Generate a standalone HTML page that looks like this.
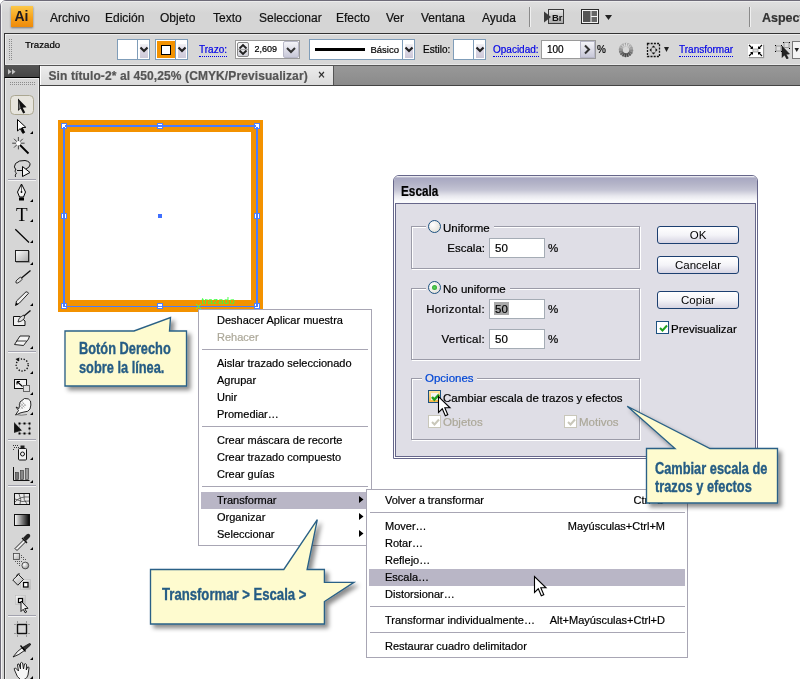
<!DOCTYPE html>
<html><head><meta charset="utf-8">
<style>
*{margin:0;padding:0;box-sizing:border-box}
html,body{width:800px;height:679px;overflow:hidden}
body{position:relative;background:#fff;font-family:"Liberation Sans",sans-serif;color:#000;-webkit-font-smoothing:antialiased}
.a{position:absolute}
.t{position:absolute;white-space:nowrap;line-height:1;-webkit-text-stroke:.2px currentColor}
#frame{left:0;top:0;width:830px;height:700px;background:linear-gradient(#dedede 2px,#dcdcdc 5px,#d5d5d5 12px);border:1px solid #6e6b78;border-radius:6px 0 0 0}
#frame2{left:1px;top:1px;width:830px;height:700px;border-left:1px solid #f2f2f2;border-top:1px solid #ececec;border-radius:4px 0 0 0}
.mb{font-size:12px;top:12px;color:#111}
#ctl{left:4px;top:33px;width:800px;height:32px;border-top:1px solid #333;border-left:1px solid #333;background:#d7d7d7}
#ctl2{left:5px;top:34px;width:800px;height:30px;border-top:1px solid #ededed;border-left:1px solid #ededed}
.blue{color:#0000e6}
.sw{top:39px;width:33px;height:21px;border:1px solid #7f9db9;background:#fff}
.dd{position:absolute;left:19px;top:0;width:12px;height:19px;border-left:1px solid #7f9db9;background:#fff}
.dd::before{content:"";position:absolute;left:2px;top:4px;width:8px;height:14px;background:linear-gradient(#f2f2f4,#dcd8e6 40%,#ccc8d8)}
.h{position:absolute;width:6px;height:6px;background:#fff;border:1px solid #4f81ff}
.mi{font-size:11px;color:#000}
.sep{height:1px;background:#a8a6b4}
.grp{position:absolute;border:1px solid #9b9ba8;box-shadow:1px 1px 0 #fff, inset 1px 1px 0 #fff}
.radio{position:absolute;width:13px;height:13px;border-radius:50%;border:1px solid #1c5180;background:radial-gradient(circle at 35% 35%,#fff,#dcdad0)}
.dl{font-size:11.5px;color:#000}
.inp{position:absolute;width:56px;height:20px;border:1px solid #a5acb5;background:#fff}
.chk{position:absolute;width:13px;height:13px;border:1px solid #1c5180;background:#fff}
.btn{position:absolute;width:82px;height:18px;border:1px solid #1c3f70;border-radius:3px;background:linear-gradient(#fff,#f4f4f8 50%,#d6d4e2);font-size:11.5px;line-height:16px;text-align:center}
.co{font-size:16px;font-weight:bold;color:#255c84;transform-origin:0 0;-webkit-text-stroke:.35px #255c84}
.dotu{border-bottom:1px dotted #0000e6}
</style></head><body><div style="position:absolute;left:0;top:0;width:800px;height:679px;will-change:transform">
<div class="a" id="frame"></div>
<div class="a" id="frame2"></div>

<!-- menu bar -->
<div class="a" style="left:11px;top:6px;width:22px;height:21px;background:linear-gradient(#fcc84a,#f6a21c 55%,#ee8a0a);box-shadow:0 1px 2px rgba(0,0,0,.45)"></div>
<div class="t" style="left:14.5px;top:9px;font-size:14px;font-weight:bold;color:#1e1a20;-webkit-text-stroke:0">Ai</div>
<div class="t mb" style="left:50px">Archivo</div>
<div class="t mb" style="left:105px">Edición</div>
<div class="t mb" style="left:160px">Objeto</div>
<div class="t mb" style="left:213px">Texto</div>
<div class="t mb" style="left:259px">Seleccionar</div>
<div class="t mb" style="left:336px">Efecto</div>
<div class="t mb" style="left:386px">Ver</div>
<div class="t mb" style="left:421px">Ventana</div>
<div class="t mb" style="left:482px">Ayuda</div>
<div class="a" style="left:529px;top:7px;width:1px;height:20px;background:#8a8a8a"></div>
<div class="a" style="left:530px;top:7px;width:1px;height:20px;background:#f0f0f0"></div>
<svg class="a" style="left:540px;top:7px" width="80" height="20">
<defs><linearGradient id="brg" x1="0" y1="0" x2="0" y2="1"><stop offset="0" stop-color="#e8e8e8"/><stop offset="1" stop-color="#a8a8a8"/></linearGradient></defs>
<rect x="8.5" y="2.5" width="15" height="14" fill="url(#brg)" stroke="#3a3a3a"/>
<path d="M4 4.5 L11 10 L4 15.5Z" fill="#3a3a3a"/>
<text x="12" y="14" font-family="Liberation Sans" font-weight="bold" font-size="9.5" fill="#111">Br</text>
<rect x="41.5" y="2.5" width="17" height="14" fill="#f4f4f4" stroke="#2a2a2a"/>
<rect x="43" y="4" width="7.5" height="11" fill="#555"/>
<rect x="51.5" y="4" width="5.5" height="5" fill="#666"/>
<rect x="51.5" y="10" width="5.5" height="5" fill="#666"/>
<path d="M65 8 H72 L68.5 13Z" fill="#222"/>
</svg>
<div class="a" style="left:749px;top:7px;width:1px;height:20px;background:#8a8a8a"></div>
<div class="a" style="left:750px;top:7px;width:1px;height:20px;background:#f0f0f0"></div>
<div class="t" style="left:762px;top:11.5px;font-size:12.5px;font-weight:bold;color:#333">Aspect</div>

<!-- control bar -->
<div class="a" id="ctl"></div>
<div class="a" id="ctl2"></div>
<div class="t" style="left:25px;top:40px;font-size:9.7px">Trazado</div>


<!-- control bar widgets -->
<div class="a sw" style="left:117px"><div class="a" style="left:0;top:0;width:20px;height:19px;background:#fff"></div><div class="dd"><svg class="a" style="left:1px;top:6px" width="10" height="8"><path d="M1.5 1.5 L5 5 L8.5 1.5" fill="none" stroke="#222" stroke-width="2.2"/></svg></div></div>
<div class="a sw" style="left:155px"><div class="a" style="left:1px;top:1px;width:18px;height:17px;background:#f39200"></div><div class="a" style="left:5px;top:5px;width:10px;height:10px;border:1.5px solid #000;background:#fff"></div><div class="dd"><svg class="a" style="left:1px;top:6px" width="10" height="8"><path d="M1.5 1.5 L5 5 L8.5 1.5" fill="none" stroke="#222" stroke-width="2.2"/></svg></div></div>
<div class="t blue dotu" style="left:199px;top:45px;font-size:10px;height:12px">Trazo:</div>
<div class="a" style="left:235px;top:40px;width:65px;height:19px;border:1px solid #9a9a9a;background:#fff"></div>
<div class="a" style="left:237px;top:42px;width:12px;height:15px;border:1px solid #8a8a8a;border-radius:2px;background:linear-gradient(#f6f6f6,#d0d0d8)"></div>
<svg class="a" style="left:237px;top:42px" width="12" height="15"><path d="M2.5 6.5 L6 3 L9.5 6.5" fill="none" stroke="#222" stroke-width="1.8"/><path d="M2.5 8.5 L6 12 L9.5 8.5" fill="none" stroke="#222" stroke-width="1.8"/><line x1="1" y1="7.5" x2="11" y2="7.5" stroke="#aaa"/></svg>
<div class="t" style="left:254.5px;top:45px;font-size:9px">2,609</div>
<div class="a" style="left:283px;top:41px;width:16px;height:17px;border:1px solid #b8b8c8;border-radius:2px;background:linear-gradient(#f4f4f8,#c8c8d8)"></div>
<svg class="a" style="left:283px;top:41px" width="16" height="17"><path d="M4 7 L8 11 L12 7" fill="none" stroke="#333" stroke-width="2"/></svg>
<div class="a" style="left:309px;top:39px;width:106px;height:21px;border:1px solid #7f9db9;background:#fff"></div>
<div class="a" style="left:315px;top:48px;width:50px;height:3px;background:#000"></div>
<div class="t" style="left:370.5px;top:45px;font-size:9.5px">Básico</div>
<div class="a" style="left:402px;top:40px;width:12px;height:19px;border-left:1px solid #7f9db9;background:#fff"><div class="a" style="left:2px;top:4px;width:8px;height:14px;background:linear-gradient(#f2f2f4,#dcd8e6 40%,#ccc8d8)"></div><svg class="a" style="left:1px;top:6px" width="10" height="8"><path d="M1.5 1.5 L5 5 L8.5 1.5" fill="none" stroke="#222" stroke-width="2.2"/></svg></div>
<div class="t" style="left:423px;top:45px;font-size:10px">Estilo:</div>
<div class="a" style="left:453px;top:39px;width:33px;height:21px;border:1px solid #7f9db9;background:#fff"></div>
<div class="a" style="left:473px;top:40px;width:12px;height:19px;border-left:1px solid #7f9db9;background:#fff"><div class="a" style="left:2px;top:4px;width:8px;height:14px;background:linear-gradient(#f2f2f4,#dcd8e6 40%,#ccc8d8)"></div><svg class="a" style="left:1px;top:6px" width="10" height="8"><path d="M1.5 1.5 L5 5 L8.5 1.5" fill="none" stroke="#222" stroke-width="2.2"/></svg></div>
<div class="t blue dotu" style="left:493px;top:45px;font-size:10px;height:12px">Opacidad:</div>
<div class="a" style="left:541px;top:40px;width:55px;height:19px;border:1px solid #9a9a9a;background:#fff"></div>
<div class="t" style="left:547px;top:45px;font-size:10px">100</div>
<div class="a" style="left:580px;top:41px;width:15px;height:17px;border:1px solid #b8b8c8;background:linear-gradient(#f4f4f8,#c8c8d8)"></div>
<svg class="a" style="left:580px;top:41px" width="15" height="17"><path d="M5 4.5 L9 8.5 L5 12.5" fill="none" stroke="#333" stroke-width="2"/></svg>
<div class="t" style="left:597px;top:45px;font-size:10px">%</div>
<svg class="a" style="left:618px;top:42px" width="16" height="16"><circle cx="8" cy="8" r="5.2" fill="none" stroke="#9a9a9a" stroke-width="4"/><line x1="11.28" y1="8.33" x2="15.16" y2="8.72" stroke="rgb(137,137,137)" stroke-width="1.5"/><line x1="10.91" y1="9.56" x2="14.34" y2="11.41" stroke="rgb(109,109,109)" stroke-width="1.5"/><line x1="10.09" y1="10.55" x2="12.56" y2="13.57" stroke="rgb(86,86,86)" stroke-width="1.5"/><line x1="8.95" y1="11.16" x2="10.08" y2="14.89" stroke="rgb(73,73,73)" stroke-width="1.5"/><line x1="7.67" y1="11.28" x2="7.28" y2="15.16" stroke="rgb(70,70,70)" stroke-width="1.5"/><line x1="6.44" y1="10.91" x2="4.59" y2="14.34" stroke="rgb(78,78,78)" stroke-width="1.5"/><line x1="5.45" y1="10.09" x2="2.43" y2="12.56" stroke="rgb(97,97,97)" stroke-width="1.5"/><line x1="4.84" y1="8.95" x2="1.11" y2="10.08" stroke="rgb(123,123,123)" stroke-width="1.5"/><line x1="4.72" y1="7.67" x2="0.84" y2="7.28" stroke="rgb(152,152,152)" stroke-width="1.5"/><line x1="5.09" y1="6.44" x2="1.66" y2="4.59" stroke="rgb(180,180,180)" stroke-width="1.5"/><line x1="5.91" y1="5.45" x2="3.44" y2="2.43" stroke="rgb(203,203,203)" stroke-width="1.5"/><line x1="7.05" y1="4.84" x2="5.92" y2="1.11" stroke="rgb(216,216,216)" stroke-width="1.5"/><line x1="8.33" y1="4.72" x2="8.72" y2="0.84" stroke="rgb(219,219,219)" stroke-width="1.5"/><line x1="9.56" y1="5.09" x2="11.41" y2="1.66" stroke="rgb(211,211,211)" stroke-width="1.5"/><line x1="10.55" y1="5.91" x2="13.57" y2="3.44" stroke="rgb(192,192,192)" stroke-width="1.5"/><line x1="11.16" y1="7.05" x2="14.89" y2="5.92" stroke="rgb(166,166,166)" stroke-width="1.5"/></svg>
<svg class="a" style="left:646px;top:42px" width="16" height="16"><rect x="1.5" y="1.5" width="12" height="13" fill="#cfcfcf" stroke="#111" stroke-width="1.3" stroke-dasharray="2 1.2"/><path d="M7.5 3.5 L9.5 5.5 H5.5Z M7.5 12.5 L9.5 10.5 H5.5Z M3.5 8 L5.5 6 V10Z M11.5 8 L9.5 6 V10Z" fill="#111"/></svg>
<svg class="a" style="left:664px;top:47px" width="8" height="6"><path d="M0 0 H5 L2.5 5Z" fill="#222"/></svg>
<div class="t blue dotu" style="left:679px;top:45px;font-size:10px;height:12px">Transformar</div>
<div class="a" style="left:748px;top:44px;width:15px;height:13px;background:#fff;box-shadow:1px 1px 1px #999"></div>
<svg class="a" style="left:748px;top:44px" width="15" height="13"><path d="M1 1 L4 4 M14 1 L11 4 M1 12 L4 9 M14 12 L11 9" stroke="#000" stroke-width="1.1"/><path d="M5 5 L2 5 L5 2Z M10 5 L13 5 L10 2Z M5 8 L2 8 L5 11Z M10 8 L13 8 L10 11Z" fill="#000"/><rect x="5" y="5" width="5" height="3" fill="#ddd" stroke="#999" stroke-width=".8"/></svg>
<svg class="a" style="left:774px;top:41px" width="18" height="18"><rect x="2" y="5" width="5" height="5" fill="#ddd" stroke="#999"/><rect x="10" y="1.5" width="5" height="5" fill="#ddd" stroke="#999"/><rect x="1" y="4" width="1" height="1" fill="#000"/><rect x="7" y="4" width="1" height="1" fill="#000"/><rect x="1" y="10" width="1" height="1" fill="#000"/><rect x="7" y="10" width="1" height="1" fill="#000"/><rect x="9" y="1" width="1" height="1" fill="#000"/><rect x="15" y="1" width="1" height="1" fill="#000"/><rect x="15" y="7" width="1" height="1" fill="#000"/><path d="M8 5 L8 16.5 L10.5 14 L12.8 18 L14.3 17.2 L12.2 13.3 L15.5 13Z" fill="#222" stroke="#111" stroke-width=".5"/></svg>
<div class="a" style="left:792px;top:41px;width:12px;height:18px;border:1px solid #777;background:#f4f4f4"></div>
<svg class="a" style="left:794px;top:48px" width="6" height="5"><path d="M0.5 0 H5 L2.75 4Z" fill="#222"/></svg>

<!-- tab row -->
<div class="a" style="left:5px;top:64px;width:800px;height:1px;background:#e9e9e9"></div>
<div class="a" style="left:4px;top:65px;width:800px;height:1px;background:#555"></div>
<div class="a" style="left:333px;top:66px;width:470px;height:20px;background:linear-gradient(#989898,#8a8a8a);border-left:1px solid #555"></div>
<div class="a" style="left:40px;top:66px;width:293px;height:20px;background:linear-gradient(#ececec,#dadada);border-left:1px solid #fff"></div>
<div class="a" style="left:40px;top:85px;width:770px;height:1px;background:#444"></div>
<div class="t" style="left:48.5px;top:70px;font-size:12px;font-weight:bold;color:#555;letter-spacing:.1px">Sin título-2* al 450,25% (CMYK/Previsualizar)</div>
<div class="t" style="left:318px;top:69px;font-size:12px;color:#222">×</div>


<!-- canvas artwork -->
<div class="a" style="left:40px;top:86px;width:770px;height:600px;background:#fff"></div>
<div class="a" style="left:58px;top:120px;width:205px;height:192px;background:#f39200"></div>
<div class="a" style="left:70px;top:132px;width:181px;height:168px;background:#fff"></div>
<div class="h" style="left:61px;top:123px"></div>
<div class="h" style="left:157px;top:123px"></div>
<div class="h" style="left:254px;top:123px"></div>
<div class="h" style="left:61px;top:213px"></div>
<div class="h" style="left:254px;top:213px"></div>
<div class="h" style="left:61px;top:303px"></div>
<div class="h" style="left:157px;top:303px"></div>
<div class="h" style="left:254px;top:303px"></div>
<div class="a" style="left:63px;top:125px;width:195px;height:182px;border:2px solid #4a7dff;border-bottom-width:1px"></div>
<div class="a" style="left:63px;top:125px;width:2px;height:2px;background:#fff"></div>
<div class="a" style="left:256px;top:125px;width:2px;height:2px;background:#fff"></div>
<div class="a" style="left:158px;top:214px;width:4px;height:4px;background:#3f6fff"></div>
<div class="t" style="left:201.5px;top:295.5px;font-size:9.5px;letter-spacing:.25px;color:#3cff3c;-webkit-text-stroke:0">trazado</div>
<svg class="a" style="left:195px;top:302.5px" width="7" height="7"><path d="M1 1L6 6M6 1L1 6" stroke="#4dff4d" stroke-width="1"/></svg>

<!-- tools panel -->
<div class="a" style="left:4px;top:65px;width:36px;height:13px;background:linear-gradient(#555,#4c4c4c 60%,#444);border-bottom:1px solid #000;border-left:1px solid #444;border-right:1px solid #333"></div>
<svg class="a" style="left:8px;top:69px" width="10" height="6"><path d="M0 0 L3.5 2.75 L0 5.5Z M4 0 L7.5 2.75 L4 5.5Z" fill="#c4c4c4"/></svg>
<div class="a" style="left:4px;top:78px;width:36px;height:610px;background:#d6d6d6;border-left:1px solid #444;border-right:1px solid #3a3a3a;box-shadow:inset -1px 0 0 #ececec, inset 1px 1px 0 #ececec"></div>
<svg class="a" style="left:0;top:0" width="45" height="679">
<rect x="10" y="82" width="1" height="1" fill="#8c8c8c"/><rect x="10" y="84" width="1" height="1" fill="#8c8c8c"/><rect x="12" y="82" width="1" height="1" fill="#8c8c8c"/><rect x="12" y="84" width="1" height="1" fill="#8c8c8c"/><rect x="14" y="82" width="1" height="1" fill="#8c8c8c"/><rect x="14" y="84" width="1" height="1" fill="#8c8c8c"/><rect x="16" y="82" width="1" height="1" fill="#8c8c8c"/><rect x="16" y="84" width="1" height="1" fill="#8c8c8c"/><rect x="18" y="82" width="1" height="1" fill="#8c8c8c"/><rect x="18" y="84" width="1" height="1" fill="#8c8c8c"/><rect x="20" y="82" width="1" height="1" fill="#8c8c8c"/><rect x="20" y="84" width="1" height="1" fill="#8c8c8c"/><rect x="22" y="82" width="1" height="1" fill="#8c8c8c"/><rect x="22" y="84" width="1" height="1" fill="#8c8c8c"/><rect x="24" y="82" width="1" height="1" fill="#8c8c8c"/><rect x="24" y="84" width="1" height="1" fill="#8c8c8c"/><rect x="26" y="82" width="1" height="1" fill="#8c8c8c"/><rect x="26" y="84" width="1" height="1" fill="#8c8c8c"/><rect x="28" y="82" width="1" height="1" fill="#8c8c8c"/><rect x="28" y="84" width="1" height="1" fill="#8c8c8c"/><rect x="30" y="82" width="1" height="1" fill="#8c8c8c"/><rect x="30" y="84" width="1" height="1" fill="#8c8c8c"/><rect x="32" y="82" width="1" height="1" fill="#8c8c8c"/><rect x="32" y="84" width="1" height="1" fill="#8c8c8c"/><rect x="34" y="82" width="1" height="1" fill="#8c8c8c"/><rect x="34" y="84" width="1" height="1" fill="#8c8c8c"/><rect x="9" y="39" width="1" height="1" fill="#8c8c8c"/><rect x="9" y="41" width="1" height="1" fill="#8c8c8c"/><rect x="9" y="43" width="1" height="1" fill="#8c8c8c"/><rect x="9" y="45" width="1" height="1" fill="#8c8c8c"/><rect x="9" y="47" width="1" height="1" fill="#8c8c8c"/><rect x="9" y="49" width="1" height="1" fill="#8c8c8c"/><rect x="9" y="51" width="1" height="1" fill="#8c8c8c"/><rect x="9" y="53" width="1" height="1" fill="#8c8c8c"/><rect x="9" y="55" width="1" height="1" fill="#8c8c8c"/><rect x="9" y="57" width="1" height="1" fill="#8c8c8c"/><rect x="9" y="59" width="1" height="1" fill="#8c8c8c"/><rect x="11" y="39" width="1" height="1" fill="#8c8c8c"/><rect x="11" y="41" width="1" height="1" fill="#8c8c8c"/><rect x="11" y="43" width="1" height="1" fill="#8c8c8c"/><rect x="11" y="45" width="1" height="1" fill="#8c8c8c"/><rect x="11" y="47" width="1" height="1" fill="#8c8c8c"/><rect x="11" y="49" width="1" height="1" fill="#8c8c8c"/><rect x="11" y="51" width="1" height="1" fill="#8c8c8c"/><rect x="11" y="53" width="1" height="1" fill="#8c8c8c"/><rect x="11" y="55" width="1" height="1" fill="#8c8c8c"/><rect x="11" y="57" width="1" height="1" fill="#8c8c8c"/><rect x="11" y="59" width="1" height="1" fill="#8c8c8c"/><rect x="8" y="179" width="28" height="1" fill="#a2a2ae"/><rect x="8" y="180" width="28" height="1" fill="#f4f4f4"/><rect x="8" y="351" width="28" height="1" fill="#a2a2ae"/><rect x="8" y="352" width="28" height="1" fill="#f4f4f4"/><rect x="8" y="439" width="28" height="1" fill="#a2a2ae"/><rect x="8" y="440" width="28" height="1" fill="#f4f4f4"/><rect x="8" y="485" width="28" height="1" fill="#a2a2ae"/><rect x="8" y="486" width="28" height="1" fill="#f4f4f4"/><rect x="8" y="615" width="28" height="1" fill="#a2a2ae"/><rect x="8" y="616" width="28" height="1" fill="#f4f4f4"/><rect x="10.5" y="95.5" width="23" height="19" rx="4" fill="#e7e5de" stroke="#aba792"/><path d="M18 98.5 L18 111 L20.6 108.6 L23.2 113.5 L25.2 112.5 L22.7 107.7 L26.5 107.3Z" fill="#111"/><path d="M18.6 100 L18.6 109.5 L20.6 107.7Z" fill="#777"/><path d="M17.5 119.5 L17.5 131 L20.2 128.6 L22.8 133.3 L24.6 132.4 L22.2 127.7 L25.8 127.3Z" fill="#fff" stroke="#000" stroke-width="1"/><path d="M20.6 128.4 L22.8 133.3 L24.6 132.4 L22.4 127.6Z" fill="#000"/><path d="M33 131 L33 134 L30 134Z" fill="#000"/><g stroke="#333" stroke-width="0.9"><path d="M18.4 137 V149.4 M12.2 143.2 H24.6 M14 138.8 L22.8 147.6 M22.8 138.8 L14 147.6"/></g><circle cx="18.4" cy="143.2" r="2.2" fill="#fff"/><path d="M20 145 L28.5 153.5" stroke="#000" stroke-width="1.8"/><path d="M16 170 Q13 167 15.5 163.5 Q19 160 25 160.5 Q30.5 161.5 30 165 Q29.5 167.5 26 169" fill="none" stroke="#111" stroke-width="1"/><path d="M17 170.5 H22.5" stroke="#111" stroke-width="1"/><path d="M15.5 169.5 Q14 172 16.5 173 Q14.5 175 15.5 177" fill="none" stroke="#111" stroke-width=".9"/><path d="M22.5 166.5 L22.5 176.5 L30 172.5Z" fill="#f4f4f4" stroke="#000" stroke-width="1"/><path d="M21.5 184 L25.5 192 L23.5 197 H19.5 L17.5 192Z" fill="#f4f4f4" stroke="#000" stroke-width="1"/><rect x="19" y="197.5" width="5" height="3" fill="#000"/><circle cx="21.5" cy="192" r="0.9" fill="#000"/><path d="M21.5 185 V191" stroke="#000" stroke-width=".6"/><path d="M33 199 L33 202 L30 202Z" fill="#000"/><text x="21.8" y="220.5" font-family="Liberation Serif" font-size="19" text-anchor="middle" fill="#000">T</text><path d="M33 219 L33 222 L30 222Z" fill="#000"/><path d="M15.3 229.3 L29 242.5" stroke="#000" stroke-width="1.2"/><path d="M33 240 L33 243 L30 243Z" fill="#000"/><defs><linearGradient id="rg" x1="0" y1="0" x2="1" y2="1"><stop offset="0" stop-color="#fff"/><stop offset="1" stop-color="#aaa"/></linearGradient><linearGradient id="gg" x1="0" y1="0" x2="1" y2="0"><stop offset="0" stop-color="#fff"/><stop offset="1" stop-color="#000"/></linearGradient></defs><rect x="15.5" y="250.5" width="13" height="11" fill="url(#rg)" stroke="#222"/><path d="M16 262.5 H29.5 V251" stroke="#999" fill="none"/><path d="M33 262 L33 265 L30 265Z" fill="#000"/><path d="M16 283 Q15 281 18 279 L20.5 277 Q22 278 22 279.5 L19.5 282 Q17.5 283.5 16 283Z" fill="#ddd" stroke="#222" stroke-width=".9"/><path d="M21.5 278 L30.5 270.5" stroke="#111" stroke-width="1.4"/><path d="M15.5 305.5 L16.5 301 L26 291.8 Q27.8 291.6 28.5 293.3 L19.5 303Z" fill="#eee" stroke="#111" stroke-width=".9"/><path d="M15.5 305.5 L16.3 302.6 L18.3 304.3Z" fill="#000"/><path d="M33 303 L33 306 L30 306Z" fill="#000"/><path d="M13.5 316.5 H20 L25 321 V325.5 H13.5Z" fill="#f0f0f0" stroke="#111" stroke-width="1"/><path d="M18 322 Q18 318 22 316 L24 315 Q25 317 24 319 Q21 322 18 322Z" fill="#ddd" stroke="#111" stroke-width=".8"/><path d="M24 316 L30.5 310.5" stroke="#111" stroke-width="1.3"/><path d="M14.5 344.5 L20 336 H29.5 L28.5 339 L23.5 345.5Z" fill="#f4f4f4" stroke="#111" stroke-width=".9"/><path d="M16.5 341 H26.5" stroke="#111" stroke-width=".8"/><path d="M33 346 L33 349 L30 349Z" fill="#000"/><circle cx="22.2" cy="365" r="6" fill="none" stroke="#111" stroke-width="1.4" stroke-dasharray="1.3 1.6"/><path d="M15.5 359 L19.5 357.5 L18.5 361.5Z" fill="#111"/><path d="M33 371 L33 374 L30 374Z" fill="#000"/><rect x="14.5" y="379.5" width="12" height="9" fill="#f2f2f2" stroke="#111"/><rect x="23.5" y="385.5" width="6" height="6" fill="#ddd" stroke="#666"/><path d="M17 381.5 L22.5 386.5 M17 381.5 H20 M17 381.5 V384.5" stroke="#000" stroke-width="1.1" fill="none"/><path d="M33 392 L33 395 L30 395Z" fill="#000"/><path d="M20 402 L24.5 398.5 Q29 398 30.5 401 Q31.5 405 30 409 Q28.5 412 24 412 L20 413 Q17.5 414.5 15.5 415 L18.5 410.5 L16 407 L19 408.5Z" fill="#fafafa" stroke="#111" stroke-width=".9"/><path d="M18.5 404 L23 409 M20 402.5 L24.5 407.5 M21.5 401 L26 406 M19 407.5 L24 403 M20.5 409 L25.5 404.5" stroke="#888" stroke-width=".55"/><path d="M16 414.5 Q21 416 27 414.5" stroke="#555" stroke-width=".7" fill="none"/><path d="M33 412 L33 415 L30 415Z" fill="#000"/><rect x="19.5" y="423.5" width="10" height="10" fill="none" stroke="#999" stroke-width=".6"/><path d="M14 422 L14 433 L22 430.5Z" fill="#333"/><path d="M14.5 423.5 L14.5 432 L21 430Z" fill="#111"/><rect x="18.5" y="422.5" width="2" height="2" fill="#000"/><rect x="18.5" y="432.5" width="2" height="2" fill="#000"/><rect x="23.5" y="422.5" width="2" height="2" fill="#000"/><rect x="23.5" y="432.5" width="2" height="2" fill="#000"/><rect x="28.5" y="422.5" width="2" height="2" fill="#000"/><rect x="28.5" y="427.5" width="2" height="2" fill="#000"/><rect x="28.5" y="432.5" width="2" height="2" fill="#000"/><rect x="18.5" y="448.5" width="8" height="11.5" rx="1" fill="#f0f0f0" stroke="#111"/><circle cx="22.5" cy="454" r="2" fill="none" stroke="#111"/><rect x="20.5" y="445.5" width="4" height="3" fill="#222"/><rect x="13" y="445" width="1" height="1" fill="#333"/><rect x="15" y="445" width="1" height="1" fill="#333"/><rect x="17" y="445" width="1" height="1" fill="#333"/><rect x="14" y="447" width="1" height="1" fill="#333"/><rect x="16" y="447" width="1" height="1" fill="#333"/><rect x="13" y="449" width="1" height="1" fill="#333"/><rect x="18" y="447" width="1" height="1" fill="#333"/><path d="M33 457 L33 460 L30 460Z" fill="#000"/><path d="M13.5 467 V480.5 H29.5" stroke="#111" fill="none"/><rect x="15.5" y="472.5" width="3" height="7" fill="#777" stroke="#333" stroke-width=".6"/><rect x="20.5" y="470.5" width="3" height="9" fill="#888" stroke="#333" stroke-width=".6"/><rect x="25.5" y="468.5" width="3" height="11" fill="#999" stroke="#333" stroke-width=".6"/><path d="M33 480 L33 483 L30 483Z" fill="#000"/><rect x="14.5" y="493.5" width="15" height="11" fill="#e8e8e8" stroke="#111"/><path d="M15 502 Q20 496 29 497 M19 494 Q22 500 20 504 M24 494 Q23 500 27 504 M15 499 Q22 503 29 501" stroke="#333" stroke-width=".7" fill="none"/><rect x="14.5" y="514.5" width="15" height="11" fill="url(#gg)" stroke="#111"/><path d="M15 548.5 L24 539.5 L26 541.5 L17 550.5Z" fill="#eee" stroke="#111" stroke-width=".9"/><path d="M23 538 L26.5 534.5 Q28.5 533 29.8 534.5 Q31 536 29.5 537.5 L26 541Z" fill="#222"/><path d="M22 538 L27 543" stroke="#111" stroke-width="1.3"/><path d="M33 547 L33 550 L30 550Z" fill="#000"/><defs><radialGradient id="cg" cx=".35" cy=".35" r=".7"><stop offset="0" stop-color="#fff"/><stop offset="1" stop-color="#999"/></radialGradient><linearGradient id="sqg" x1="0" y1="0" x2="1" y2="1"><stop offset="0" stop-color="#fafafa"/><stop offset="1" stop-color="#b0b0b0"/></linearGradient></defs><rect x="13.5" y="553.5" width="6" height="6" fill="url(#sqg)" stroke="#444" stroke-width=".8"/><rect x="21" y="555" width="1" height="1" fill="#555"/><rect x="23" y="557" width="1" height="1" fill="#555"/><rect x="21" y="557" width="1" height="1" fill="#555"/><rect x="23" y="559" width="1" height="1" fill="#555"/><rect x="25" y="559" width="1" height="1" fill="#555"/><rect x="15" y="561" width="1" height="1" fill="#555"/><rect x="17" y="561" width="1" height="1" fill="#555"/><rect x="19" y="561" width="1" height="1" fill="#555"/><rect x="21" y="561" width="1" height="1" fill="#555"/><rect x="19" y="563" width="1" height="1" fill="#555"/><rect x="17" y="563" width="1" height="1" fill="#555"/><rect x="19" y="565" width="1" height="1" fill="#555"/><circle cx="25.3" cy="565.5" r="3.4" fill="url(#cg)" stroke="#333" stroke-width=".8"/><rect x="20.5" y="579.5" width="10" height="10" fill="url(#sqg)" stroke="#bbb" stroke-width=".6"/><path d="M12.8 580 L18.5 574.5 L23.5 579.5 L17.8 585.2Z" fill="url(#sqg)" stroke="#111" stroke-width=".9"/><path d="M16.5 576.5 Q17 573 20 574" stroke="#111" stroke-width=".8" fill="none"/><rect x="23.5" y="582.5" width="4.5" height="4.5" fill="#fff" stroke="#000" stroke-width="1.2"/><rect x="15.5" y="595.5" width="10" height="9" fill="url(#sqg)" stroke="#bbb" stroke-width=".6"/><rect x="18.5" y="598.5" width="4" height="4" fill="#fff" stroke="#000" stroke-width="1.2"/><path d="M21 601 L21 611.5 L23.2 609.3 L25.2 612.8 L26.6 612 L24.7 608.6 L28 608.3Z" fill="#eee" stroke="#000" stroke-width=".9"/><rect x="17.5" y="624.5" width="9" height="9" fill="none" stroke="#111" stroke-width="1.4"/><path d="M14 624.5 H16 M28 624.5 H30 M14 633.5 H16 M28 633.5 H30 M17.5 621 V623 M26.5 621 V623 M17.5 635 V637 M26.5 635 V637" stroke="#888" stroke-width=".8"/><path d="M13 657 Q17 651 22.5 647.5 L24.5 650.5 Q19 655 13 657Z" fill="#f2f2f2" stroke="#111" stroke-width=".9"/><path d="M22.5 647.5 L29.5 643.5 Q31 643.5 30.5 645 L24.5 650.5Z" fill="#333" stroke="#111" stroke-width=".8"/><path d="M20.5 645.5 L25.5 651.5" stroke="#000" stroke-width="1.3"/><path d="M33 657 L33 660 L30 660Z" fill="#000"/><path d="M14.5 670 Q13.5 668 15.5 668 L18.5 671 L17.5 665 Q17.5 663.5 19 664 L20.5 669 L20.5 663 Q21.5 661.8 22.6 663 L23.5 669 L24.5 664 Q25.8 663.2 26.5 664.5 L26.3 670 L27.6 667 Q29 666.5 29 668 L28 675 Q26.5 680 21 680 Q17 678 14.5 670Z" fill="#f6f6f6" stroke="#111" stroke-width=".9"/><path d="M33 676 L33 679 L30 679Z" fill="#000"/></svg>




<!-- dialog -->
<div class="a" style="left:393px;top:175px;width:365px;height:284px;border:1px solid #66668a;border-radius:6px 6px 0 0;background:#fff"></div>
<div class="a" style="left:394px;top:176px;width:363px;height:27px;border-radius:5px 5px 0 0;background:linear-gradient(#fff 0,#a8a8c2 2px,#b4b4c8 8px,#c4c4d4 14px,#e8e8ee 20px,#fafafc 25px)"></div>
<div class="a" style="left:395px;top:203px;width:361px;height:254px;border:1px solid #66668a;background:#dfdee6"></div>
<div class="t" style="left:400.5px;top:184px;font-size:14px;font-weight:bold;color:#000;transform:scaleX(.84);transform-origin:0 0">Escala</div>
<div class="grp" style="left:411px;top:226px;width:229px;height:43px"></div>
<div class="grp" style="left:411px;top:288px;width:229px;height:72px"></div>
<div class="grp" style="left:411px;top:378px;width:229px;height:62px"></div>
<div class="a" style="left:426px;top:222px;width:68px;height:10px;background:#dfdee6"></div>
<div class="a" style="left:426px;top:283px;width:84px;height:10px;background:#dfdee6"></div>
<div class="a" style="left:422px;top:374px;width:55px;height:10px;background:#dfdee6"></div>
<div class="radio" style="left:428px;top:220px"></div>
<div class="radio" style="left:428px;top:281px"><div class="a" style="left:3px;top:3px;width:5px;height:5px;border-radius:50%;background:radial-gradient(#5fd35f,#1e9a1e)"></div></div>
<div class="t dl" style="left:443px;top:223px">Uniforme</div>
<div class="t dl" style="left:443px;top:284px">No uniforme</div>
<div class="t dl" style="left:400px;width:85px;text-align:right;top:243px">Escala:</div>
<div class="t dl" style="left:400px;width:85px;text-align:right;top:304px;letter-spacing:.35px">Horizontal:</div>
<div class="t dl" style="left:400px;width:85px;text-align:right;top:334px;letter-spacing:.3px">Vertical:</div>
<div class="inp" style="left:489px;top:238px"></div>
<div class="inp" style="left:489px;top:299px"></div>
<div class="inp" style="left:489px;top:329px"></div>
<div class="t dl" style="left:495px;top:243px">50</div>
<div class="a" style="left:494px;top:302px;width:15px;height:13px;background:#a9a9a9"></div>
<div class="t dl" style="left:495px;top:304px">50</div>
<div class="t dl" style="left:495px;top:334px">50</div>
<div class="t dl" style="left:548px;top:243px">%</div>
<div class="t dl" style="left:548px;top:304px">%</div>
<div class="t dl" style="left:548px;top:334px">%</div>
<div class="t dl" style="left:425px;top:373px;color:#0046d5">Opciones</div>
<div class="chk" style="left:428px;top:390px;border-color:#1c5180;background:linear-gradient(#fde3a0,#f8b84a)"><div class="a" style="left:2px;top:2px;width:7px;height:7px;background:#f4f4f0"></div><svg class="a" style="left:1px;top:1px" width="11" height="11"><path d="M2 5 L4.3 7.6 L9 2.6" fill="none" stroke="#21a121" stroke-width="2.4"/></svg></div>
<div class="t dl" style="left:443px;top:393px">Cambiar escala de trazos y efectos</div>
<div class="chk" style="left:428px;top:415px;border-color:#c9c7ba"><svg class="a" style="left:1px;top:1px" width="11" height="11"><path d="M2 5 L4.5 7.5 L9 2.5" fill="none" stroke="#c9c7ba" stroke-width="2"/></svg></div>
<div class="t dl" style="left:443px;top:417px;color:#aca899">Objetos</div>
<div class="chk" style="left:564px;top:415px;border-color:#c9c7ba"><svg class="a" style="left:1px;top:1px" width="11" height="11"><path d="M2 5 L4.5 7.5 L9 2.5" fill="none" stroke="#c9c7ba" stroke-width="2"/></svg></div>
<div class="t dl" style="left:579px;top:417px;color:#aca899">Motivos</div>
<div class="btn" style="left:657px;top:226px">OK</div>
<div class="btn" style="left:657px;top:256px">Cancelar</div>
<div class="btn" style="left:657px;top:291px">Copiar</div>
<div class="chk" style="left:656px;top:321px;border-color:#1c5180"><svg class="a" style="left:1px;top:1px" width="11" height="11"><path d="M2 5 L4.5 7.5 L9 2.5" fill="none" stroke="#21a121" stroke-width="2"/></svg></div>
<div class="t dl" style="left:671px;top:324px">Previsualizar</div>

<!-- context menu -->
<div class="a" style="left:198px;top:309px;width:174px;height:237px;background:#fff;border:1px solid #a8a6b4"></div>
<div class="t mi" style="left:217px;top:315px">Deshacer Aplicar muestra</div>
<div class="t mi" style="left:217px;top:332px;color:#aca899">Rehacer</div>
<div class="a sep" style="left:202px;top:349px;width:166px"></div>
<div class="t mi" style="left:217px;top:358px">Aislar trazado seleccionado</div>
<div class="t mi" style="left:217px;top:375px">Agrupar</div>
<div class="t mi" style="left:217px;top:392px">Unir</div>
<div class="t mi" style="left:217px;top:409px">Promediar…</div>
<div class="a sep" style="left:202px;top:426px;width:166px"></div>
<div class="t mi" style="left:217px;top:435px">Crear máscara de recorte</div>
<div class="t mi" style="left:217px;top:452px">Crear trazado compuesto</div>
<div class="t mi" style="left:217px;top:469px">Crear guías</div>
<div class="a sep" style="left:202px;top:486px;width:166px"></div>
<div class="a" style="left:201px;top:492px;width:166px;height:17px;background:#b9b6c6"></div>
<div class="t mi" style="left:217px;top:495px">Transformar</div>
<svg class="a" style="left:359px;top:496px" width="5" height="8"><path d="M0 0L4.5 3.5L0 7Z" fill="#000"/></svg>
<div class="t mi" style="left:217px;top:512px">Organizar</div>
<svg class="a" style="left:359px;top:513px" width="5" height="8"><path d="M0 0L4.5 3.5L0 7Z" fill="#000"/></svg>
<div class="t mi" style="left:217px;top:529px">Seleccionar</div>
<svg class="a" style="left:359px;top:530px" width="5" height="8"><path d="M0 0L4.5 3.5L0 7Z" fill="#000"/></svg>

<!-- submenu -->
<div class="a" style="left:366px;top:489px;width:322px;height:169px;background:#fff;border:1px solid #a8a6b4"></div>
<div class="t mi" style="left:385px;top:495px">Volver a transformar</div>
<div class="t mi" style="right:135px;top:495px">Ctrl+D</div>
<div class="a sep" style="left:370px;top:512px;width:315px"></div>
<div class="t mi" style="left:385px;top:521px">Mover…</div>
<div class="t mi" style="right:135px;top:521px">Mayúsculas+Ctrl+M</div>
<div class="t mi" style="left:385px;top:538px">Rotar…</div>
<div class="t mi" style="left:385px;top:555px">Reflejo…</div>
<div class="a" style="left:369px;top:569px;width:316px;height:17px;background:#b9b6c6"></div>
<div class="t mi" style="left:385px;top:572px">Escala…</div>
<div class="t mi" style="left:385px;top:589px">Distorsionar…</div>
<div class="a sep" style="left:370px;top:606px;width:315px"></div>
<div class="t mi" style="left:385px;top:615px">Transformar individualmente…</div>
<div class="t mi" style="right:135px;top:615px">Alt+Mayúsculas+Ctrl+D</div>
<div class="a sep" style="left:370px;top:632px;width:315px"></div>
<div class="t mi" style="left:385px;top:641px">Restaurar cuadro delimitador</div>

<!-- callouts -->
<svg class="a" style="left:0;top:0" width="800" height="679">
<defs><filter id="sh" x="-20%" y="-20%" width="150%" height="150%"><feDropShadow dx="3.5" dy="3.5" stdDeviation="2.2" flood-color="#000" flood-opacity="0.45"/></filter></defs>
<g fill="#fefbcf" stroke="#2a6186" stroke-width="1.35" stroke-linejoin="miter" filter="url(#sh)">
<polygon points="65,331 134,331 170.5,317.5 169.5,331 186.5,331 186.5,386 65,386"/>
<polygon points="646.5,448.5 675,448.5 627.25,406.25 710,448.5 777.5,448.5 777.5,503 646.5,503"/>
<polygon points="150.5,569.5 283.8,569.5 317.3,519.7 307.1,569.5 324.4,569.5 324.4,582.4 353.9,582.4 324.4,601.5 324.4,624 150.5,624"/>
</g></svg>
<div class="t co" style="left:78.5px;top:341px;transform:scaleX(.8)">Botón Derecho</div>
<div class="t co" style="left:78.5px;top:359.5px;transform:scaleX(.8)">sobre la línea.</div>
<div class="t co" style="left:655px;top:460.5px;transform:scaleX(.8)">Cambiar escala de</div>
<div class="t co" style="left:655px;top:478.5px;transform:scaleX(.8)">trazos y efectos</div>
<div class="t co" style="left:162px;top:587px;transform:scaleX(.82)">Transformar &gt; Escala &gt;</div>
<!-- cursors -->
<svg class="a" style="left:533px;top:575px" width="16" height="24"><path d="M1.5 1.5 L1.5 17.5 L5.3 13.8 L8.3 20.8 L10.8 19.8 L7.8 12.8 L13 12.8Z" fill="#fff" stroke="#000" stroke-width="1.1" stroke-linejoin="miter"/></svg>
<svg class="a" style="left:437px;top:395px" width="16" height="24"><path d="M1.5 1.5 L1.5 17.5 L5.3 13.8 L8.3 20.8 L10.8 19.8 L7.8 12.8 L13 12.8Z" fill="#fff" stroke="#000" stroke-width="1.1" stroke-linejoin="miter"/></svg>
</div></body></html>
